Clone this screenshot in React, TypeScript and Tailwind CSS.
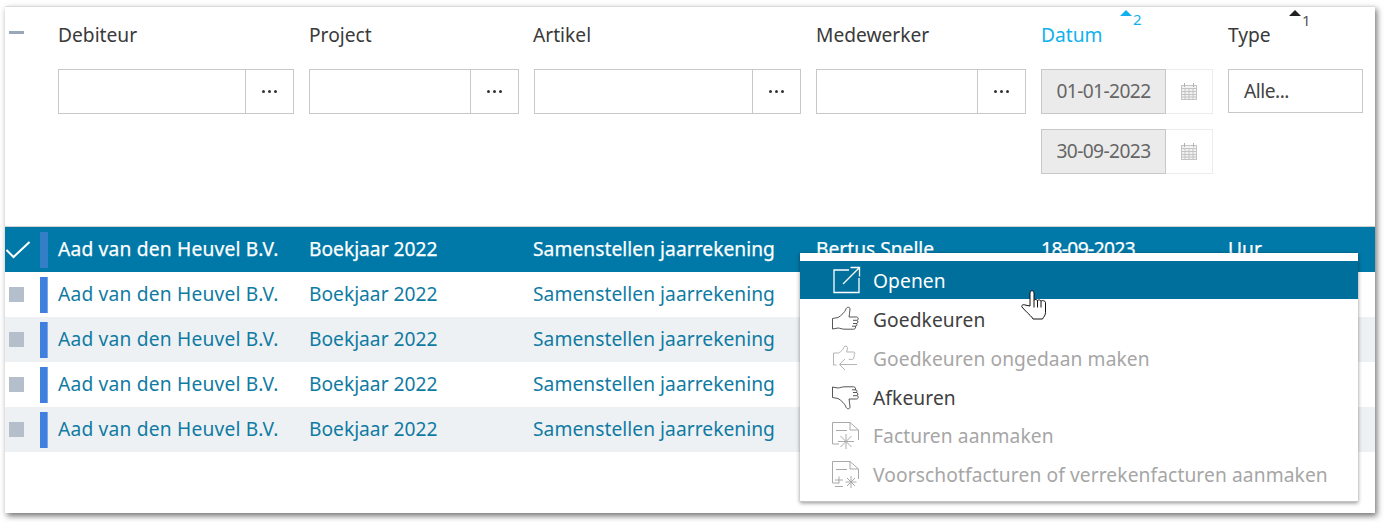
import React from "react";

const cols = ["w-[251px]", "w-[224px]", "w-[283px]", "w-[225px]", "w-[187px]", "w-[147px]"];

function Lookup({ w }: { w: string }) {
  return (
    <div className={`${w} h-[45px] flex border border-[#c8c8c8] bg-white`}>
      <div className="flex-1" />
      <div className="w-[48px] border-l border-[#c8c8c8] flex items-center justify-center gap-[3px]">
        <span className="w-[3px] h-[3px] rounded-full bg-[#333]" />
        <span className="w-[3px] h-[3px] rounded-full bg-[#333]" />
        <span className="w-[3px] h-[3px] rounded-full bg-[#333]" />
      </div>
    </div>
  );
}

function Cal() {
  return (
    <svg width="18" height="19" viewBox="0 0 18 19" fill="none" stroke="#c4c4c4" strokeWidth="1">
      <rect x="1.5" y="3.5" width="15" height="14" fill="#f2f2f2" />
      <path d="M1.5 6.5h15M1.5 9.5h15M1.5 12.5h15M1.5 15h15M5 6.5v11M9 6.5v11M13 6.5v11" />
      <path d="M4.5 1v4M13.5 1v4" stroke="#b0b0b0" />
    </svg>
  );
}

function DateBox({ value }: { value: string }) {
  return (
    <div className="w-[172px] h-[45px] flex">
      <div className="w-[125px] bg-[#ebebeb] border border-[#c8c8c8] flex items-center justify-center tracking-[-0.6px] text-[#666]">{value}</div>
      <div className="flex-1 border border-l-0 border-[#ececec] flex items-center justify-center">
        <Cal />
      </div>
    </div>
  );
}

function Row({ alt, selected }: { alt?: boolean; selected?: boolean }) {
  const bg = selected ? "bg-[#0079a8] text-white [-webkit-text-stroke:0.25px_white]" : alt ? "bg-[#eef1f4] text-[#0f7ba3]" : "bg-white text-[#0f7ba3]";
  return (
    <div className={`h-[45px] flex items-center whitespace-nowrap ${bg}`}>
      <div className={`w-[35px] flex justify-start ${selected ? "pl-[1px]" : "pl-[4px]"}`}>
        {selected ? (
          <svg width="24" height="18" viewBox="0 0 24 18" fill="none" stroke="#fff" strokeWidth="2">
            <path d="M.5 9 L7.500 16 L23.500 1" />
          </svg>
        ) : (
          <span className="w-[15px] h-[15px] bg-[#b4bfcb]" />
        )}
      </div>
      <div className={`w-[8px] h-[36px] border-r border-r-[#7aa6e8] mr-[10px] ${selected ? "bg-[#327fc8] border-r-[#327fc8]" : "bg-[#3f80de]"}`} />
      <div className={`${cols[0]} tracking-[0.2px]`}>Aad van den Heuvel B.V.</div>
      <div className={cols[1]}>Boekjaar 2022</div>
      <div className={`${cols[2]} tracking-[0.05px]`}>Samenstellen jaarrekening</div>
      <div className={cols[3]}>{selected ? "Bertus Snelle" : ""}</div>
      <div className={`${cols[4]} tracking-[-0.6px]`}>{selected ? "18-09-2023" : ""}</div>
      <div className={cols[5]}>{selected ? "Uur" : ""}</div>
    </div>
  );
}

function IconOpen() {
  return (
    <svg width="30" height="28" viewBox="0 0 30 28" fill="none" stroke="#fff" strokeWidth="1.3">
      <path d="M17 4H2v22.500h25V12" />
      <path d="M11 18 27 2M18.500 1.500h9v9" />
    </svg>
  );
}
const thumb =
  "M.5 23V12.500L6 11.500C9.500 9.500 13 6 14 3c.5-2.200 4-2.500 4 0 0 3-.8 5.500-1 8h7.500c2.200 0 2.200 2.800.5 3.300 1.300.6 1.300 2.800-.5 3.200.8.900.6 2.500-1 2.700.5 1-.2 3-1.800 3H13c-3 0-5-1-7-1.200z";
function IconUp() {
  return (
    <svg className="block" width="28" height="26" viewBox="0 0 28 26" fill="none" stroke="#444" strokeWidth="0.9">
      <path d={thumb} />
      <path d="M21 14.300h4M21 17.500h4M20 20.200h4" />
    </svg>
  );
}
function IconDown() {
  return (
    <svg className="block" width="28" height="26" viewBox="0 0 28 26" fill="none" stroke="#444" strokeWidth="0.9">
      <g transform="matrix(1 0 0 -1 0 26)">
        <path d={thumb} />
        <path d="M21 14.300h4M21 17.500h4M20 20.200h4" />
      </g>
    </svg>
  );
}
function IconUndo() {
  return (
    <svg className="block" width="28" height="26" viewBox="0 0 28 26" fill="none" stroke="#b5b5b5" strokeWidth="1">
      <path d="M1.500 17V8h5c2.500-1.500 5-3.500 5.500-6 .2-1.300 3.500-1.200 3.500.8 0 1.500-.6 3-1 4.200h7c1.800 0 1.800 2.200.3 2.500 1.100.6.9 2.300-.3 2.500.7.800.3 2-.8 2.300h-4" />
      <path d="M1.500 17v3h3" />
      <path d="M25 19.500H8M13 14l-5.500 5.500L13 25" />
    </svg>
  );
}
function IconInv({ plus }: { plus?: boolean }) {
  return (
    <svg className="block" width="28" height="28" viewBox="0 0 28 28" fill="none" stroke="#a9a9a9" strokeWidth="1">
      <path d="M7 22H.5V.5H18L26.500 8v10" />
      <path d="M18 .5V8h8.500M4 8.500h11" />
      {plus ? (
        <>
          <path d="M3 19h8M7 15.500v7M3 25.500h8" />
          <path d="M19 15v12M13.500 21h11M15 17l8 8M23 17l-8 8" />
        </>
      ) : (
        <path d="M14 12v15M6 19.500h16M8.500 14l11 11M19.500 14l-11 11" />
      )}
    </svg>
  );
}

function Item({ icon, label, active, disabled, lower }: { icon: React.ReactNode; label: string; active?: boolean; disabled?: boolean; lower?: boolean }) {
  const c = active ? "bg-[#006f9c] text-white h-[38px]" : disabled ? "text-[#a6a6a6] h-[39px]" : "text-[#404040] h-[39px]";
  return (
    <div className={`flex items-center whitespace-nowrap tracking-[0.1px] ${c}`}>
      <div className="w-[73px] pl-[32px] flex items-center">{icon}</div>
      <span className={lower ? "mt-[4px]" : "mt-[2px]"}>{label}</span>
    </div>
  );
}

export default function App() {
  return (
    <div className="w-[1384px] h-[522px] bg-white pt-[6px] pl-[5px] overflow-hidden" style={{ fontFamily: '"Noto Sans", sans-serif' }}>
      <div className="relative w-[1370px] h-[507px] bg-white border-t border-[#dcdcdc] shadow-[2px_3px_6px_rgba(0,0,0,0.55)] text-[19.2px] text-[#3a3a3a]">
        <div className="h-[219px] flex pt-[14px]">
          <div className="w-[53px] pl-[4px] pt-[10px]">
            <div className="w-[15px] h-[3px] bg-[#9aa7bb]" />
          </div>
          <div className={cols[0]}>
            <div className="h-[28px] leading-[28px] mb-[20px]">Debiteur</div>
            <Lookup w="w-[236px]" />
          </div>
          <div className={cols[1]}>
            <div className="h-[28px] leading-[28px] mb-[20px]">Project</div>
            <Lookup w="w-[210px]" />
          </div>
          <div className={cols[2]}>
            <div className="h-[28px] leading-[28px] mb-[20px]">Artikel</div>
            <Lookup w="w-[267px] ml-[1px]" />
          </div>
          <div className={cols[3]}>
            <div className="h-[28px] leading-[28px] mb-[20px]">Medewerker</div>
            <Lookup w="w-[210px]" />
          </div>
          <div className={cols[4]}>
            <div className="relative h-[28px] leading-[28px] mb-[20px] text-[#12b0ee]">
              Datum
              <span className="absolute left-[79px] top-[-11px] w-0 h-0 border-x-[6px] border-x-transparent border-b-[6px] border-b-[#12b0ee]" />
              <span className="absolute left-[92px] top-[-16px] text-[15px]">2</span>
            </div>
            <div className="flex flex-col gap-[15px]">
              <DateBox value="01-01-2022" />
              <DateBox value="30-09-2023" />
            </div>
          </div>
          <div className={cols[5]}>
            <div className="relative h-[28px] leading-[28px] mb-[20px]">
              Type
              <span className="absolute left-[61px] top-[-11px] w-0 h-0 border-x-[6px] border-x-transparent border-b-[6px] border-b-[#222]" />
              <span className="absolute left-[74px] top-[-15px] text-[15px] text-[#555]">1</span>
            </div>
            <div className="w-[135px] h-[44px] border border-[#c8c8c8] flex items-center pl-[15px] tracking-[-0.5px] text-[#444]">Alle...</div>
          </div>
        </div>
        <div className="border-t border-[#cfcfcf]">
          <Row selected />
          <Row />
          <Row alt />
          <Row />
          <Row alt />
        </div>

        <div className="absolute left-[795px] top-[246px] w-[558px] h-[249px] bg-white pt-[8px] shadow-[0_1px_4px_rgba(0,0,0,0.45)] border-b border-[#c4c4c4]">
          <Item active icon={<IconOpen />} label="Openen" />
          <Item lower icon={<IconUp />} label="Goedkeuren" />
          <Item lower disabled icon={<IconUndo />} label="Goedkeuren ongedaan maken" />
          <Item lower icon={<IconDown />} label="Afkeuren" />
          <Item disabled icon={<IconInv />} label="Facturen aanmaken" />
          <Item disabled icon={<IconInv plus />} label="Voorschotfacturen of verrekenfacturen aanmaken" />
        </div>

        <svg className="absolute left-[1016px] top-[283px]" width="26" height="32" viewBox="0 0 26 32" fill="#fff" stroke="#111" strokeWidth="1">
          <path d="M9 16V3c0-3 4-3 4 0v7.500c0-1.500 3.500-1.500 3.500.5 0-1.500 3.500-1.500 3.500.5 0-1.500 4.500-1 4.500 1v10c0 3-2 4.500-3 6.500H12c-1-2.500-6-6-11-12-1-1.500 1-3 3-2z" />
          <path d="M13 10.500v7M16.500 11v6.500M20 11.500v6" fill="none" />
        </svg>
      </div>
    </div>
  );
}
